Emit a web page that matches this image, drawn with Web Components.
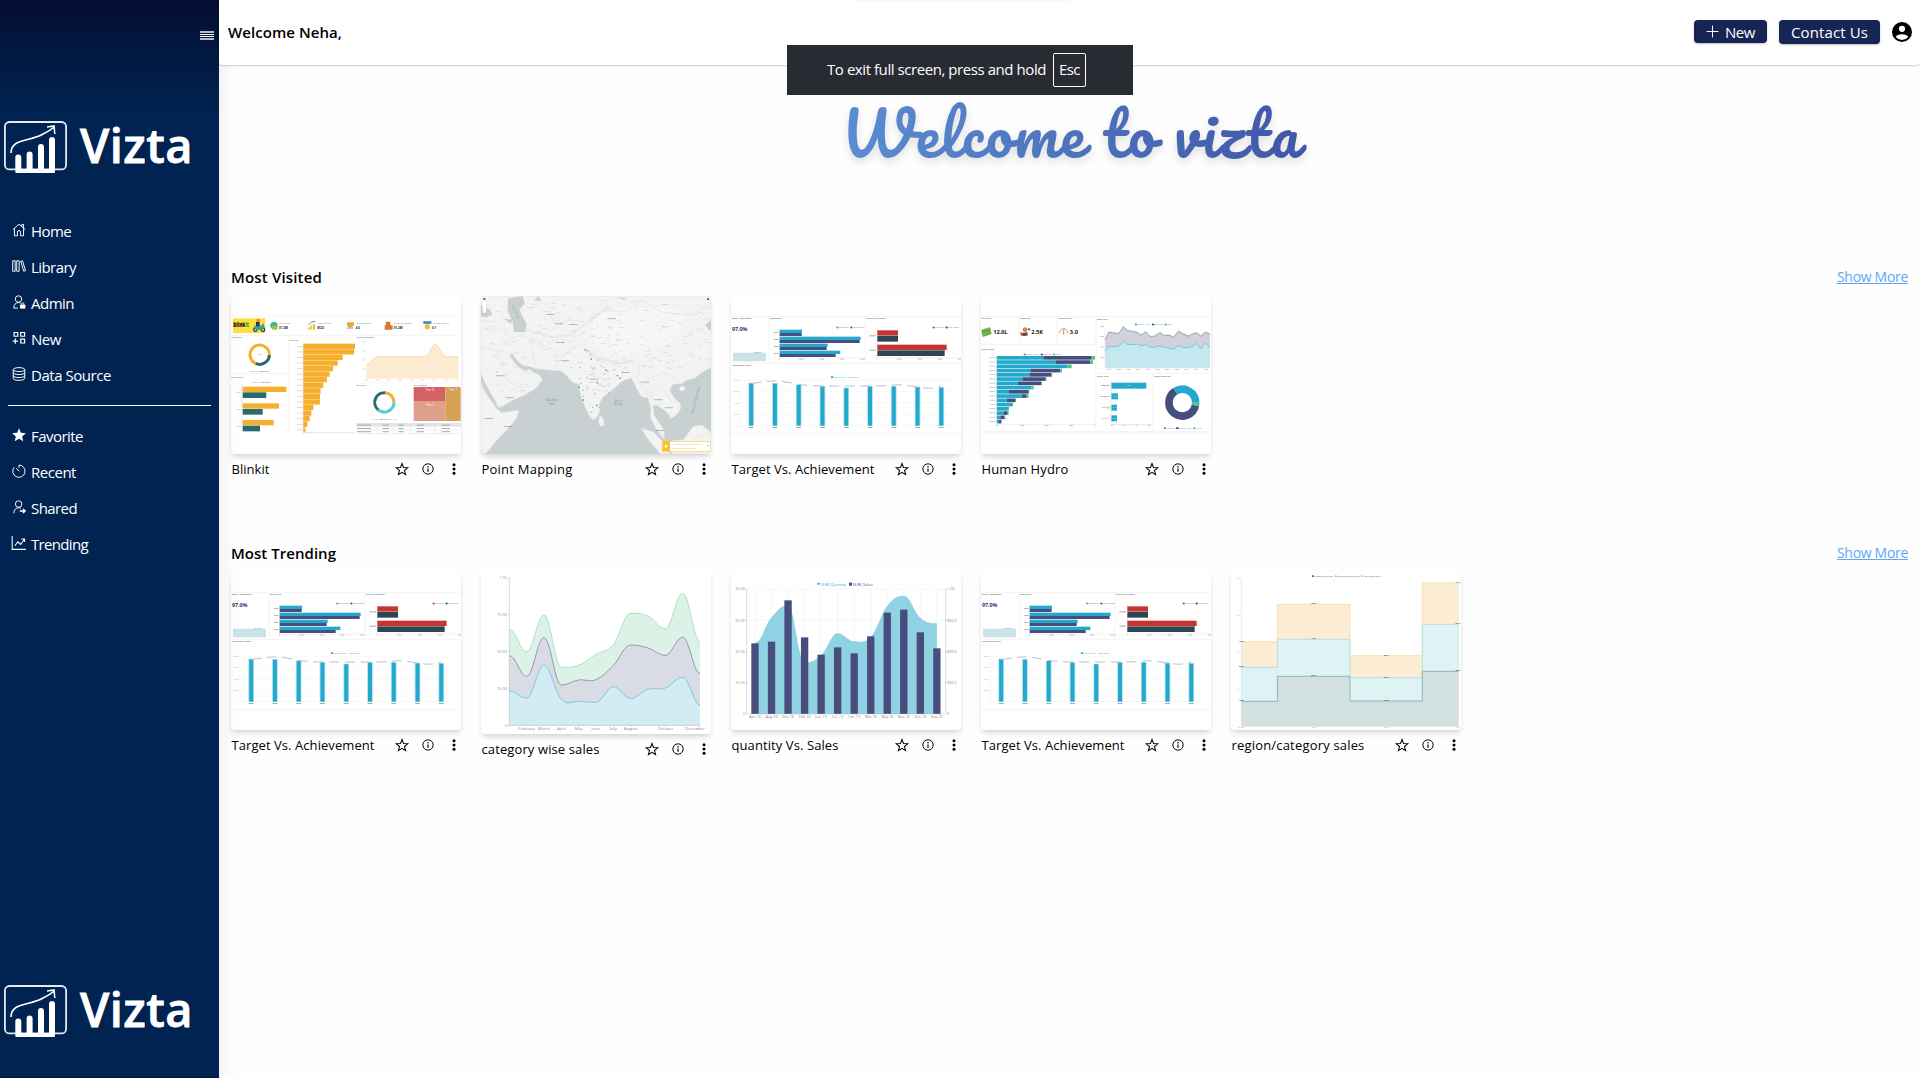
<!DOCTYPE html>
<html lang="en">
<head>
<meta charset="utf-8">
<title>Vizta</title>
<style>
html,body{margin:0;height:100%;overflow:hidden;background:#fefefe}
body{font:15px/24px "Segoe UI","Open Sans","Noto Sans",sans-serif;color:#000}
</style>
</head>
<body>
<vz-app></vz-app>
<script>
const define=(name,html,setup)=>customElements.define(name,class extends HTMLElement{
  connectedCallback(){
    if(this.shadowRoot)return;
    const t=document.createElement('template');
    t.innerHTML=typeof html==='function'?html(this):html;
    this.attachShadow({mode:'open'}).append(t.content.cloneNode(true));
    if(setup)setup(this);
  }
});

/* Text run whose tracking is adjusted so that it fills a given width. */
define('fit-text',`<style>:host{display:inline-block;white-space:nowrap;flex:none}span{display:inline-block;white-space:pre;text-decoration:inherit;text-underline-offset:inherit}</style><span><slot></slot></span>`,el=>{
  const s=el.shadowRoot.querySelector('span'),w=+el.getAttribute('w'),n=el.textContent.length;
  s.style.letterSpacing=(w-s.getBoundingClientRect().width)/n+'px';
  el.style.width=w+'px';
});

const ICONS={
  home:'<path d="M1 7.6 8 1.3l7 6.3M2.8 6.2V14.6h3.4V10.4Q6.2 8.6 8 8.6t1.8 1.8v4.2h3.4V6.2M11.2 4V1.6h2v4.2"/>',
  library:'<path d="M.8 2h2.8v12H.8zM5.4 2h2.8v12H5.4zM10 2.6l2-.6 3.4 11.4-2 .6z"/>',
  admin:'<circle cx="7.4" cy="4.6" r="3.7"/><path d="M2 15c0-3.6 2-6.3 5.4-6.3 1 0 1.7.2 2.4.6M2 15h4.8"/><path d="M9.6 11.4h5.2v3.6H9.6z" fill="currentColor"/><path d="M10.9 11v-.9q0-1.2 1.3-1.2t1.3 1.2v.9"/>',
  apps:'<path d="M2.4 1.7h4.2V6H2.4zM10 1.7h4.4V6H10zM10 9.2h4.4v4.5H10zM3.8 8.6v6M.8 11.6h6" stroke-width="1.35"/>',
  data:'<ellipse cx="8" cy="3" rx="6.6" ry="2.3"/><path d="M1.4 3v10c0 3 13.2 3 13.2 0V3M1.4 6.4c0 3 13.2 3 13.2 0M1.4 9.8c0 3 13.2 3 13.2 0"/>',
  starfill:'<path d="m8 .2 2.2 5.2 5.7.5-4.3 3.7 1.3 5.6L8 12.2l-4.9 3 1.3-5.6L.1 5.9l5.7-.5z" fill="currentColor" stroke="none"/>',
  recent:'<path d="M8 1.2A7 7 0 1 1 2.5 3.7M8 1.2v3.2M4.7 4.8 8.3 8.2"/>',
  shared:'<circle cx="7.6" cy="4.6" r="3.7"/><path d="M2 15.2c.2-3.8 2.3-6.3 5.6-6.3 1 0 1.8.2 2.5.7"/><path d="M8.8 12.5h6M12.6 10.2l2.4 2.3-2.4 2.3" stroke-width="1.6"/>',
  trend:'<path d="M.2 0v15.3H15.8M3.2 11.2l3.5-4.5 3.2 3 4.2-6M10.7 3.4h3.7v3.5" stroke-width="1.2"/>',
  plus:'<path d="M8 .7v14.6M.7 8h14.6" stroke-width="1.2"/>',
  star:'<path d="m8 1.7 1.7 4.6 4.9.3-3.8 3.1 1.3 4.7L8 11.7l-4.1 2.7 1.3-4.7-3.8-3.1 4.9-.3z" stroke-width="1.15"/>',
  info:'<circle cx="8" cy="8" r="6.9" stroke-width="1.3"/><path d="M8 7.2v4.5" stroke-width="1.6"/><circle cx="8" cy="4.9" r="1" fill="currentColor" stroke="none"/>',
  dots:'<g fill="currentColor" stroke="none"><circle cx="8" cy="2.4" r="2"/><circle cx="8" cy="8" r="2"/><circle cx="8" cy="13.6" r="2"/></g>',
  user:'<circle cx="8" cy="8" r="8" fill="currentColor" stroke="none"/><circle cx="8" cy="5.4" r="2.5" fill="#fff" stroke="none"/><path d="M3 12q1-2.3 5-2.3t5 2.3q-2 2.4-5 2.4T3 12z" fill="#fff" stroke="none"/>'
};
define('vz-icon',el=>{const s=el.getAttribute('size')||14;return `<style>:host{display:inline-flex;flex:none}svg{display:block;overflow:visible}</style><svg width="${s}" height="${s}" viewBox="0 0 16 16" fill="none" stroke="currentColor" stroke-width="1.1">${ICONS[el.getAttribute('name')]}</svg>`});

define('vz-logo',`<style>:host{display:flex;height:52px;padding-left:4px;color:#fff;align-items:flex-start}
svg{flex:none}fit-text{margin-left:13px;font:600 47px/52px "Open Sans",sans-serif;margin-top:-2px;-webkit-text-stroke:.8px #fff}</style>
<svg width="63" height="52" viewBox="0 0 63 52" fill="none" stroke="#fff"><rect x=".9" y="1" width="61.2" height="47.4" rx="4.5" stroke-width="1.8" opacity=".9"/>
<path d="M7 32C7 17 26 21 39 13Q46 10 50 6M43 6l7-1 .8 8" stroke-width="1.6"/>
<path d="M14.3 50V36.5M25.6 50V33.5M37 50V26M48 50V19" stroke-width="6" stroke-linecap="round"/><path d="M15 50h32" stroke-width="4"/></svg><fit-text w="113">Vizta</fit-text>`);

define('nav-item',el=>`<style>:host{display:flex;height:36px;align-items:center;padding-left:12px;color:#fff}vz-icon{width:19px;margin-top:-2px}</style><vz-icon name="${el.getAttribute('icon')}" size="14"></vz-icon><fit-text w="${el.getAttribute('w')}">${el.textContent}</fit-text>`);

define('side-bar',`<style>:host{display:flex;flex-direction:column;width:219px;flex:none;height:100%;box-sizing:border-box;background:linear-gradient(#030e30 0,#00224f 105px,#002352 115px);border-bottom:1px solid #001232;box-shadow:0 0 22px rgba(0,0,0,.09);z-index:2}
.toggle{display:flex;flex-direction:column;gap:1px;align-self:flex-end;margin:31px 5px 81px 0;width:14px}
.toggle i{height:2px;background:#b6bccb}.toggle i:nth-child(2){height:1px;background:#fff}.toggle i:nth-child(3){height:1px;background:#fff}
nav{display:flex;flex-direction:column;padding-top:40px}
hr{width:203px;height:1px;border:0;margin:12px 8px;background:#fff}.foot{margin-top:auto;margin-bottom:40px}</style>
<div class="toggle"><i></i><i></i><i></i><i></i></div><vz-logo></vz-logo>
<nav><nav-item icon="home" w="40">Home</nav-item><nav-item icon="library" w="45">Library</nav-item><nav-item icon="admin" w="43">Admin</nav-item><nav-item icon="apps" w="30">New</nav-item><nav-item icon="data" w="80">Data Source</nav-item><hr>
<nav-item icon="starfill" w="52">Favorite</nav-item><nav-item icon="recent" w="45">Recent</nav-item><nav-item icon="shared" w="46">Shared</nav-item><nav-item icon="trend" w="57">Trending</nav-item></nav>
<vz-logo class="foot"></vz-logo>`);

define('top-bar',`<style>:host{display:flex;height:65px;flex:none;box-sizing:border-box;align-items:center;padding:0 8px 2px 9px;background:#fff;border-radius:0 0 4px 4px;box-shadow:0 1px 2px rgba(0,0,0,.2);position:relative;z-index:3}
.hi{font-weight:600;margin-right:auto}
button{display:flex;align-items:center;justify-content:center;gap:6px;border:0;margin:0;padding:0;border-radius:4px;background:#172554;color:#fff;font:inherit;box-shadow:0 1px 2px rgba(0,0,0,.25)}
.n{width:73px;height:23px;margin-right:12px}.c{width:101px;height:24px;margin-right:12px}</style>
<fit-text class="hi" w="114">Welcome Neha,</fit-text><button class="n"><vz-icon name="plus" size="13"></vz-icon><fit-text w="30">New</fit-text></button><button class="c"><fit-text w="77">Contact Us</fit-text></button><vz-icon name="user" size="20"></vz-icon>`);

define('hero-title',`<style>:host{display:flex;justify-content:center;padding-left:3px;height:191px;box-sizing:border-box;padding-top:24px}
fit-text{font:400 60px/88px "Pacifico",cursive;padding:0 12px 8px;height:88px;background:linear-gradient(90deg,#5b8fd3,#4055a6);-webkit-background-clip:text;background-clip:text;color:transparent;filter:drop-shadow(0 4px 4px rgba(0,0,0,.13))}</style><fit-text w="460">Welcome to vizta</fit-text>`);

/* ---------- thumbnails ---------- */
const R=(x,y,w,h,f,o='')=>`<rect x="${x}" y="${y}" width="${w}" height="${h}" fill="${f}" ${o}/>`;
const T=(x,y,s,t,f='#777',o='')=>`<text x="${x}" y="${y}" font-size="${s}" fill="${f}" ${o}>${t}</text>`;
const TL=(x,y,s,t,f,w)=>T(x,y,s,t,f,`textLength="${w}" lengthAdjust="spacingAndGlyphs"`);
const L=(d,c='#e5e5e5',w=1.5)=>`<path d="${d}" fill="none" stroke="${c}" stroke-width="${w}"/>`;
const arc=(cx,cy,r,a,b,c,w)=>{const p=t=>{t=t*Math.PI/180;return (cx+r*Math.sin(t)).toFixed(1)+' '+(cy-r*Math.cos(t)).toFixed(1)};return `<path d="M${p(a)}A${r} ${r} 0 ${b-a>180?1:0} 1 ${p(b)}" fill="none" stroke="${c}" stroke-width="${w}"/>`};
const smooth=p=>{let d='M'+p[0];for(let i=1;i<p.length;i++){const a=p[i-1],b=p[i],z=p[i-2]||a,n=p[i+1]||b;
  const m=(q,r,s)=>((r[1]-q[1])*(s[1]-r[1])<=0?0:(s[1]-q[1])/(s[0]-q[0]));
  const h=(b[0]-a[0])/2.6,ma=m(z,a,b)||0,mb=m(a,b,n)||0;
  d+=`C${a[0]+h} ${a[1]+ma*h} ${b[0]-h} ${b[1]-mb*h} ${b}`}return d};

function blinkit(){
  let s=L('M33 168H723M33 227H723M33 341H206M206 227V521M406 369H723M148 168V227M262 168V227M377 168V227M492 168V227M607 168V227','#ededed');
  s+=R(39,175,97,44,'#ffdf3d')+T(40,201,18,'<tspan>blink</tspan><tspan fill="#3f9b2a">it</tspan>','#111','font-weight="800" textLength="47" lengthAdjust="spacingAndGlyphs"');
  s+=`<g fill="none" stroke="#28474b" stroke-width="4"><circle cx="106" cy="209" r="5"/><circle cx="129" cy="209" r="5"/></g><path d="M101 201l12-11 8 9 9-10 4 14-12 7h-15z" fill="#30a6a2"/><path d="M108 185h11v14h-11z" fill="#2b3948"/><circle cx="115" cy="181" r="5" fill="#e5882f"/>`;
  s+='<circle cx="162" cy="196" r="11" fill="#46b982"/><path d="M157 197h15v12h-15z" fill="#96c74b"/><path d="M265 209v-7h5v7zM272 209v-13h5v13zM279 209v-16h6v16z" fill="#e9bd46"/><path d="M265 194l10-8 12-2" stroke="#47ad75" stroke-width="3" fill="none"/><path d="M381 187h21v9l-7 6h-9l-5-6z" fill="#f2a32e"/><path d="M381 204h18" stroke="#89b9dc" stroke-width="5"/><path d="M497 185h14v11h7v13h-24v-13h4z" fill="#d9772c"/><path d="M610 184h24v7h-24z" fill="#397ebc"/><circle cx="622" cy="200" r="8" fill="#f3bd39"/>';
  [[177,'Total Sales','$1.2M',33],[292,'Number of Item','8523',41],[407,'Average Rating','4.0',46],[521,'Sum of Sales','$1.2M',54],[636,'Average Visibility','0.1',52]].forEach(a=>s+=TL(a[0],193,7,a[1],'#777',a[3])+T(a[0],206,9,a[2],'#222','font-weight="700"'));
  s+=TL(34,234,7,'Fat Content','#444',32)+TL(34,354,7,'Outlet Location','#444',35)+TL(207,243,7,'Item Type','#444',28)+TL(410,234,7,'Outlet Establishment','#444',54)+TL(410,378,7,'Outlet Size','#444',28)+TL(581,378,7,'Outlet Location','#444',40);
  s+=arc(119,284,29,90,205,'#296a70',9)+arc(119,284,29,205,450,'#f5ae2b',9)+TL(112,286,6,'$1.2M','#777',14);
  s+=TL(91,336,6,'■ Low Fat','#d99a2b',26)+TL(121,336,6,'■ Regular','#296a70',27)+TL(96,369,6,'■ Low Fat','#d99a2b',26)+TL(125,369,6,'■ Regular','#296a70',27);
  [[380,131,71],[430,109,60],[480,93,52]].forEach((a,i)=>{s+=R(68,a[0],a[1],16,'#f5b02d')+R(68,a[0]+17,a[2],17,'#2a696d')+TL(50,a[0]+20,6,'Tier '+(i+1),'#777',14)});
  s+=L('M66 374V520M249 250V518H405','#ccc');
  [155,152,118,103,89,79,71,60,52,50,50,30,24,19,12,6].forEach((w,i)=>{s+=R(250,251+i*16.7,w,15.8,'#f5af2d')+R(230,258+i*16.7,17,2,'#ccc')});
  s+=`<path d="M439 356V316Q455 300 468 290H613C629 290 633 253 646 253S662 290 680 290H715V356Z" fill="#fdecd0"/>`+L('M439 316Q455 300 468 290H613C629 290 633 253 646 253S662 290 680 290H715','#f3cf94',2);
  for(let i=0;i<9;i++)s+=R(433+i*34,359,11,2,'#ccc');for(let i=0;i<4;i++)s+=R(427,245+i*27,10,2,'#ccc');
  s+=arc(493,427,29,5,90,'#f5ae2b',9)+arc(493,427,29,90,220,'#5bcdcd',9)+arc(493,427,29,220,365,'#296a70',9)+TL(456,481,6,'■ Small','#f5ae2b',19)+TL(480,481,6,'■ Medium','#296a70',26)+TL(511,481,6,'■ High','#5bcdcd',19);
  s+=R(581,381,95,42,'#d26264')+R(581,423,95,60,'#dfa08b')+R(676,381,46,102,'#d6a152')+T(616,394,10,'Tier 3','#fff')+T(617,437,10,'Tier 2','#fff')+T(687,394,10,'Tier 1','#fff');
  s+=R(408,489,315,11,'#e3e4e7')+L('M408 510H723M408 521H723M471 489V521M520 489V521M571 489V521M644 489V521','#ddd');
  for(let j=0;j<3;j++)[[411,42],[487,20],[535,16],[590,22],[665,25]].forEach(a=>s+=R(a[0],494+j*10,a[1],2.5,'#999'));
  return s;
}
function map(){
  let s=R(33,48,690,474,'#c8d0d2');
  s+=`<g fill="#f3f3f2" stroke="#e2e3e3" stroke-width="2"><path d="M33 48H723V120L708 135 715 148 723 150V262L695 278 674 295 650 300 635 311 609 313 599 330 612 354 630 369 633 385 620 404 602 416 595 402 578 386 559 375 549 377 552 405 569 431 583 451 582 477 571 465 552 434 541 411 543 387 534 353 515 351 502 330 493 310 484 294 464 300 449 310 440 318 420 337 400 350 388 372 389 394 382 411 371 419 362 413 344 379 331 342 327 313 305 306 292 289 273 272 238 270 194 266 176 259 158 258 140 239 126 222 119 227 132 246 148 263 166 272 180 268 190 277 209 285 217 299 199 323 168 343 130 360 93 381 83 381 77 363 58 333 43 303 33 280Z"/><path d="M33 313 52 346 79 384 94 398 146 390 139 416 112 448 78 484 48 520H33ZM391 405l9 11 2 21-12 2-5-15ZM514 445l35 10 31 31 21 35h-31l-35-42ZM606 482l34-3 30-40 27-4 26 24V522H606ZM628 322l12-5 6 9-8 8-10-4Z"/></g>`;
  s+='<path d="M114 55 158 49 164 72 148 88 158 112 169 130 166 156 132 156 128 126 113 93ZM33 75l28 15 6 14-20 8-14-4ZM104 116l23 4-4 13ZM193 60l13-12 8 17ZM437 52l31 2-6 5ZM723 120l-18 15 18 17Z" fill="#c8d0d2"/>';
  s+='<path d="M365 142Q370 108 408 92T480 80T580 84T640 112T628 160T580 197T520 204Q500 238 450 232T377 200Q362 172 365 142Z" fill="#f6f6f5"/>';
  s+='<g fill="none" stroke="#d4d5d5" stroke-width="1.6" opacity=".65"><path d="M33 120l45 7 44 48 32-8 57 18 28-33 54-31 63 5 42-31 73-2 41-33 64 37 83 9 64-39M178 175l19 80M231 195l30-17 54 5 34 25 35 38 45 7 56-9 34 34M250 265l34-44 45-32M467 240l-12 56M510 245l-7 57 38 49M515 285l31 9 34-19 45 30M33 200l85 20M80 210l30 90 76 50M551 365l-10-40 29-10 35 48M640 507l30-32 50-13"/><path d="M348 210l42 25 58 15 42-8" stroke-width="7" opacity=".5"/><path d="M168 148l80 24 55-8 48-35 65-50" stroke-width="8" opacity=".35"/></g>';
  let q=17,r=()=>(q=(q*16807)%2147483647)/2147483647;
  for(let i=0;i<230;i++){const x=40+r()*670,y=60+r()*210;if(x>110&&x<170&&y<160)continue;s+=R(x.toFixed(),y.toFixed(),(3+r()*13).toFixed(),1.6,'#a9abac','opacity=".45"')}
  for(let i=0;i<40;i++){s+=R((345+r()*75).toFixed(),(260+r()*75).toFixed(),8,1.6,'#aaa','opacity=".5"')+R((70+r()*105).toFixed(),(270+r()*65).toFixed(),7,1.6,'#aaa','opacity=".35"')}
  [[241,102],[266,130],[310,132],[424,115],[270,186],[372,296],[91,286],[118,352],[56,414],[113,438],[564,358],[596,382],[570,450],[658,492],[524,305],[284,241],[466,276]].forEach(a=>s+=R(a[0]-12,a[1],25,2.5,'#8f9395','opacity=".75"'));
  [[344,208],[352,211],[360,222],[362,235],[382,238],[392,256],[405,268],[411,271],[431,267],[440,285],[328,293],[331,309],[326,320],[337,328],[339,347],[338,358],[373,339],[362,395],[378,374],[386,380],[414,337],[448,293],[327,261],[350,292],[380,306],[366,380]].forEach((a,i)=>s+=R(a[0],a[1],4,4,i%3?'#7bc8df':'#6c6fa0'));
  s+=T(229,362,10,'Arabian','#8c9699')+T(238,374,10,'Sea','#8c9699')+T(434,366,8,'Bay of','#8c9699')+T(433,376,8,'Bengal','#8c9699')+T(670,403,11,'South China Sea','#8c9699','transform="rotate(-76 670 403)"')+T(125,76,8,'Caspian Sea','#8c9699','transform="rotate(65 125 76)"');
  s+=R(38,66,10,32,'#fff')+R(40,54,6,6,'#666')+R(711,55,6,5,'#555')+R(577,484,145,30,'#fff','stroke="#f6cf58" stroke-width="2"')+R(577,483,23,31,'#fbc02d')+'<path d="M588 493l5 9h-10z" fill="#fff"/>'+TL(606,496,7,'You Have Reached The Max','#f3ad1c',85)+TL(606,507,7,'Limit Of Points To Map','#f3ad1c',74)+T(711,502,10,'×','#555');
  return s;
}
function target(){
  let s=L('M33 110H723M33 250H723M33 460H723M148 110V250M436 110V250','#e9e9e9');
  s+=TL(35,117,7,'Target Achievement','#333',60)+TL(150,117,7,'Sales Lead','#333',33)+TL(438,117,7,'Furniture Category','#333',58)+TL(35,259,7,'Achievement Trend','#333',58)+T(36,153,16,'97.0%','#4b286c','font-weight="700" textLength="46"');
  s+=R(39,218,99,26,'#cbe3e8')+R(101,216,25,2,'#9fc5cd');
  s+=R(349,140,6,5,'#22a9cc')+TL(357,145,7,'2023 Target','#777',30)+R(391,140,6,5,'#464c7e')+TL(399,145,7,'2023 Achieved','#777',35)+R(638,140,6,5,'#c53533')+TL(646,145,7,'2023 Target','#777',28)+R(677,140,6,5,'#2f4554')+TL(685,145,6,'2023 Achieved','#777',31)+L('M179 146V234H435M472 146V234H723','#ddd');
  [[149,67,66],[170,243,240],[191,144,141],[212,182,168]].forEach(a=>s+=R(179,a[0],a[1],10,'#23a9cb')+R(179,a[0]+10,a[2],9,'#4b4d80')+R(162,a[0]+7,14,2.5,'#aaa'));
  [[151,62,62],[194,208,202]].forEach(a=>s+=R(472,a[0],a[1],16,'#c53534')+R(472,a[0]+17,a[2],17,'#2e4654')+R(448,a[0]+15,20,3,'#aaa'));
  for(let i=0;i<5;i++)s+=R(176+i*61,236,i?15:4,2.5,'#bbb')+R(470+i*61,236,i?14:4,2.5,'#bbb');
  s+=R(333,289,7,5,'#22a9cc')+TL(342,294,7,'2023 Achieved','#22a9cc',35)+TL(381,294,7,'– 2023 Target','#888',38)+L('M60 300V437H698M60 300H698M60 334H698M60 368H698M60 403H698','#eee');
  [310,311,315,320,325,320,320,322,323].forEach((y,i)=>s+=R(85+i*71.3,y-2,17,439-y,'#b4e0ec')+R(87.5+i*71.3,y,12,437-y,'#22a9cc')+R(86+i*71.3,441,15,2.5,'#999'));
  s+='<path d="M94 311Q140 303 165 303T235 313Q270 318 310 318H450Q500 318 521 315T592 321T663 317" fill="none" stroke="#bcbcd2" stroke-width="3" stroke-dasharray="30 17"/>';
  ['8.0M','6.0M','4.0M','2.0M','0'].forEach((t,i)=>s+=T(57,303+i*34.2,7,t,'#aaa','text-anchor="end"'));
  return s;
}
function hydro(){
  const B='#22a9cc',P='#464e80',G='#56c287';
  let s=L('M33 110H723M33 193H378M378 110V455M378 280H723M550 280V455M33 455H723M148 110V193M262 110V193M33 460H723','#e9e9e9');
  s+=TL(35,117,7,'Total Sales','#333',29)+TL(150,117,7,'Employees','#333',31)+TL(264,117,7,'Average Rating','#333',43)+TL(381,119,7,'Sales Trend','#333',31)+TL(35,209,7,'Product Sales','#333',37)+TL(381,292,7,'Outlet Type','#333',35)+TL(552,292,7,'Product Distribution','#333',50);
  s+='<path d="M34 150l26-8 5 20-27 9z" fill="#6ba83e"/><path d="M39 148l18-5M38 163l25-8" stroke="#aad06f" stroke-width="2"/><circle cx="165" cy="149" r="7" fill="#e48330"/><path d="M150 157l11 3 12-4v11h-20z" fill="#cf4b35"/><path d="M158 158h13l-3 9h-8z" fill="#2e4d71"/><path d="M173 145h8v6h-8z" fill="#487bc4"/>'+arc(281,158,12,-100,0,'#f4a63a',3)+arc(281,158,12,0,100,'#60acd8',3)+'<path d="M281 148v16" stroke="#eb7b39" stroke-width="3"/>';
  [[70,'12.0L',42],[184,'2.5K',35],[299,'3.0',25]].forEach(a=>s+=T(a[0],163,17,a[1],'#222',`font-weight="700" textLength="${a[2]}"`));
  const leg=(x,y)=>R(x,y-5,7,5,B)+TL(x+8,y,7,'Healthy Water','#777',37)+R(x+51,y-5,7,5,P)+TL(x+59,y,7,'Cold Drink','#777',25)+R(x+88,y-5,7,5,G)+TL(x+97,y,7,'Juice','#777',15);
  s+=leg(161,226);
  [[220,365,375],[256,361,369],[291,291,305],[181,271,276],[178,243,247],[157,227,230],[144,213,216],[184,184,191],[117,176,178],[155,170,176],[110,137,138],[126,126,129],[114,114,117],[100,113,116],[91,104,106],[87,94,95]].forEach((a,i)=>{const y=228+i*12.75;s+=R(80,y,a[0]-80,11,B)+R(a[0],y,a[1]-a[0],11,P)+R(a[1],y,a[2]-a[1],11,G)+R(58,y+4,18,2,'#bbb')});
  s+=L('M79 228V433H378','#ddd');for(let i=0;i<5;i++)s+=R(78+i*73,435,i&&i<4?12:5,2.5,'#bbb');
  s+=leg(495,136);
  const xs=[405,416,446,460,472,488,500,513,527,542,554,570,583,597,611,625,641,656,667,679,693,706,720];
  const t=[180,157,161,141,152,155,157,166,156,171,169,158,167,166,172,154,163,169,163,159,169,157,163],b=[212,200,199,184,193,194,192,197,194,202,202,197,202,204,208,197,203,203,199,190,207,189,203];
  const line=a=>xs.map((x,i)=>x+' '+a[i]).join('L');
  s+=`<path d="M${line(t.map(v=>v-3))}L720 263L405 263Z" fill="#b9e2cb"/><path d="M${line(t)}L720 263L405 263Z" fill="#d0d1dd"/><path d="M${line(b)}L720 263L405 263Z" fill="#c4e8f0"/>`+L('M'+line(t),'#9293b0',2)+L('M'+line(b),'#55b9d3',2)+L('M405 139V264H721','#ddd');
  for(let i=0;i<11;i++)s+=R(411+i*29,267,13,2,'#bbb');for(let i=0;i<4;i++)s+=R(390,138+i*31,12,2,'#bbb');
  [[308,105,'9.2L'],[340,20,'1.2L'],[374,17,'1.1L'],[406,17,'1.0L']].forEach(a=>s+=R(424,a[0],a[1],18,B)+T(424+a[1]/2,a[0]+11,6,a[2],'#fff','text-anchor="middle"'));
  s+=TL(393,319,7,'amazon','#222',25)+TL(389,352,7,'BigBasket','#9a2f79',32)+TL(393,385,7,'Flipkart','#3590cc',18)+R(412,379,7,7,'#f4d335')+TL(394,417,7,'JioMart','#999',23)+L('M423 300V434H548','#ccc');
  for(let i=0;i<4;i++)s+=R(422+i*37,435,8,2,'#bbb');
  s+=arc(637,368,40,-32,90,B,23)+arc(637,368,40,90,102,G,23)+arc(637,368,40,102,328,P,23)+R(581,442,7,5,B)+TL(590,447,7,'Cold Drink','#777',24)+R(618,442,8,5,P)+TL(628,447,7,'Healthy Water','#777',36)+R(669,442,7,5,G)+TL(678,447,7,'Juice','#777',15);
  return s;
}
function category(){
  const xs=[118,170,222,274,326,378,430,482,534,586,638,690];
  const rows=[[[208,275,165,322,316,283,254,160,168,206,100,244],'#dcf2e6','#9fddb8'],[[287,349,233,375,360,359,316,255,264,286,232,340],'#d9dbe5','#8489aa'],[[393,414,316,418,424,427,380,415,388,384,352,435],'#d3ecf4','#6fc0da']];
  let s='';rows.forEach(r=>{const d=smooth(xs.map((x,i)=>[x,r[0][i]]));s+=`<path d="${d}V496H118Z" fill="${r[1]}"/>`+L(d,r[2],2.5)});
  s+=L('M118 52V496H690M114 53h5M114 164h5M114 275h5M114 386h5M114 496h5M170 496v5M222 496v5M274 496v5M326 496v5M378 496v5M430 496v5M482 496v5M586 496v5M690 496v5','#b5b5b5');
  ['1.0L','75.0K','50.0K','25.0K','0'].forEach((t,i)=>s+=T(112,57+i*110.8,12,t,'#999','text-anchor="end"'));
  [['February',170,50],['March',222,36],['April',274,26],['May',326,24],['June',378,27],['July',430,22],['August',482,40],['October',586,47],['December',675,60]].forEach(a=>s+=T(a[1],511,12,a[0],'#888',`text-anchor="middle" textLength="${a[2]}" lengthAdjust="spacingAndGlyphs"`));
  return s;
}
function quantity(){
  const xs=[...Array(12)].map((_,i)=>105+i*49.6),v=[248,172,135,308,286,220,244,231,137,107,173,190];
  let s=L('M80 87H677M80 181H677M80 275H677M80 368H677'+xs.map(x=>'M'+x+' 87V462').join(''),'#e9edf2');
  s+=`<path d="${smooth(xs.map((x,i)=>[x,v[i]]))}V462H105Z" fill="#8fd2e3"/>`;
  [250,245,121,232,284,262,280,229,158,149,217,265].forEach((y,i)=>s+=R(xs[i]-11,y,22,462-y,'#474e7e')+T(xs[i],475,10,['Apr-16','Aug-16','Dec-16','Feb-16','Jan-15','Jul-15','Jun-15','Mar-16','May-16','Nov-16','Oct-16','Sep-16'][i],'#777','text-anchor="middle" textLength="35"'));
  s+=L('M80 87V462H677V87M76 87h4M76 181h4M76 275h4M76 368h4M677 87h4M677 181h4M677 275h4M677 368h4','#bbb');
  ['80.0K','60.0K','40.0K','20.0K','0'].forEach((t,i)=>s+=T(75,91+i*93.7,11,t,'#999','text-anchor="end"'));['1.2K','900.0','600.0','300.0','0'].forEach((t,i)=>s+=T(681,91+i*93.7,11,t,'#888'));
  return s+R(292,69,8,5,'#35aecc')+TL(303,79,11,'SUM_Quantity','#35aecc',75)+R(387,68,9,9,'#474e7e')+TL(398,79,11,'SUM_Sales','#474e7e',60);
}
function region(){
  const X=[64,172,390,607,715],a=[245,133,287,69],b=[322,238,353,193],c=[424,349,423,334];
  const step=q=>q.map((y,i)=>(i?'V':'M64 ')+y+'H'+X[i+1]).join('');let s='';
  [[a,'#fcecd3','#f9dba7'],[b,'#def3f4','#a9dedd'],[c,'#d2e0e0','#82aeb0']].forEach(r=>s+=`<path d="${step(r[0])}V499H64Z" fill="${r[1]}"/>`+L(step(r[0]),r[2],2.5));
  s+=L('M64 54V499H715V69','#ddd',2);
  [[a,['40.5K','60.8K','38.1K','71.1K']],[b,['30.6K','47.9K','26.1K','55.1K']],[c,['13.8K','27.6K','13.5K','30.0K']]].forEach(r=>r[0].forEach((y,i)=>s+=T([64,281,499,714][i],y,7,r[1][i],'#222','text-anchor="middle" font-weight="600" textLength="15" lengthAdjust="spacingAndGlyphs"')));
  [54,165,276,387].forEach(y=>s+=T(61,y+2,6,y==54?'80K':y==165?'60K':y==276?'40K':'20K','#bbb','text-anchor="end"'));
  [['Central',64],['East',281],['South',499],['West',712]].forEach(q=>s+=T(q[1],505,6,q[0],'#aaa','text-anchor="middle"'));
  return s+R(276,46,5,5,'#296a70')+TL(282,51,7,'Technology(SUM_Sales)','#555',58)+R(345,46,5,5,'#70d0d0')+TL(351,51,7,'Office Supplies(SUM_Sales)','#555',68)+R(423,46,5,5,'#f5b53f')+TL(430,51,7,'Furniture(SUM_Sales)','#555',52);
}
const THUMBS={blinkit:[blinkit,108],map:[map,48],target:[target,48],hydro:[hydro,48],category:[category,36],quantity:[quantity,36],region:[region,36]};
define('chart-thumb',el=>{const k=el.getAttribute('kind'),h=k==='category'?162:158;return `<style>:host{display:block;height:${h}px;border-radius:4px;overflow:hidden;background:#fff}svg{display:block;font-family:"Open Sans",sans-serif}</style><svg width="230" height="${h}" viewBox="33 ${THUMBS[k][1]} 690 ${h*3}">${THUMBS[k][0]()}</svg>`});

define('report-card',el=>`<style>:host{display:flex;flex-direction:column;width:230px;flex:none;font-size:13px;line-height:20px}
chart-thumb{box-shadow:0 4px 6px -1px rgba(0,0,0,.13),0 2px 4px -2px rgba(0,0,0,.1)}
.row{display:flex;align-items:center;height:30px;padding:0 1px 0 .5px}fit-text{margin-right:auto}vz-icon{width:26px;justify-content:center}.end{margin-right:-7px}</style>
<chart-thumb kind="${el.getAttribute('kind')}"></chart-thumb><div class="row"><fit-text w="${el.getAttribute('w')}">${el.textContent}</fit-text><vz-icon name="star" size="14"></vz-icon><vz-icon name="info" size="12"></vz-icon><vz-icon class="end" name="dots" size="12"></vz-icon></div>`);

define('card-section',el=>`<style>:host{display:flex;flex-direction:column;padding:0 12px;height:276px;box-sizing:border-box}
header{display:flex;justify-content:space-between;height:40px;box-sizing:border-box;align-items:center;padding-top:2px}
.t{font-weight:600}.m{font-size:14px;color:#60a5fa;text-decoration:underline;text-underline-offset:1px}
.cards{display:flex;gap:20px;align-items:flex-start}</style>
<header><fit-text class="t" w="${el.getAttribute('w')}">${el.getAttribute('heading')}</fit-text><fit-text class="m" w="71">Show More</fit-text></header><div class="cards"><slot></slot></div>`);

define('exit-toast',`<style>:host{display:flex;position:absolute;left:787px;top:45px;width:346px;height:50px;box-sizing:border-box;padding-left:40px;align-items:center;gap:7px;background:#292b33;color:#fff;z-index:9}
fit-text{margin-top:-2px}kbd{display:flex;align-items:center;justify-content:center;box-sizing:border-box;width:33px;height:34px;border:1px solid #fff;border-radius:2px;font:inherit}</style><fit-text w="219">To exit full screen, press and hold</fit-text><kbd><fit-text w="21">Esc</fit-text></kbd>`);

define('vz-app',`<style>:host{display:flex;height:100vh;position:relative;overflow:hidden}main{display:flex;flex-direction:column;flex:1;min-width:0}
.edge{position:absolute;left:853px;top:-5px;width:216px;height:4px;border-radius:4px;box-shadow:0 0 5px rgba(0,0,0,.12);z-index:8}</style>
<side-bar></side-bar><main><top-bar></top-bar><hero-title></hero-title>
<card-section heading="Most Visited" w="91"><report-card kind="blinkit" w="38">Blinkit</report-card><report-card kind="map" w="91">Point Mapping</report-card><report-card kind="target" w="143">Target Vs. Achievement</report-card><report-card kind="hydro" w="87">Human Hydro</report-card></card-section>
<card-section heading="Most Trending" w="105"><report-card kind="target" w="143">Target Vs. Achievement</report-card><report-card kind="category" w="118">category wise sales</report-card><report-card kind="quantity" w="107">quantity Vs. Sales</report-card><report-card kind="target" w="143">Target Vs. Achievement</report-card><report-card kind="region" w="133">region/category sales</report-card></card-section>
</main><exit-toast></exit-toast><div class="edge"></div>`);
</script>
</body>
</html>
